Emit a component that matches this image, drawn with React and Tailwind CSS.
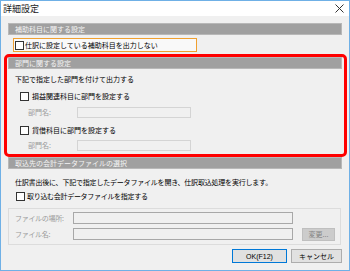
const jp = { fontFamily: '"Noto Sans CJK JP", "Noto Sans", sans-serif' };

const Check = () => (
  <span className="inline-block w-[9px] h-[9px] border border-[#333333] bg-white shrink-0" />
);

const Header = ({ children, className = '' }) => (
  <div className={`h-[12px] bg-[#a0a0a0] border border-[#b8b8b8] flex items-center pl-[6px] text-[7px] text-[#f4f4f4] ${className}`}>
    {children}
  </div>
);

const App = () => {
  return (
    <div className="relative w-[350px] h-[271px] border border-[#6fb0e6] bg-[#f0f0f0] text-black overflow-hidden" style={jp}>
      {/* title bar */}
      <div className="h-[15px] bg-white flex items-center justify-between pl-[2px] pr-[5px]">
        <span className="text-[9px] leading-none text-[#222]">詳細設定</span>
        <svg width="9" height="9" viewBox="0 0 9 9" className="text-[#333]">
          <path d="M0.5 0.5 8.5 8.5 M8.5 0.5 0.5 8.5" stroke="currentColor" strokeWidth="1" />
        </svg>
      </div>

      <div className="px-[7px] pr-[7px]">
        <Header className="mt-[7px]">補助科目に関する設定</Header>

        <div className="mt-[3px] ml-[5px] w-[184px] h-[14px] border border-[#f0a030] bg-[#f9f9f9] flex items-center gap-[1px] pl-[1px] text-[7px] leading-none">
          <Check />
          <span>仕訳に設定している補助科目を出力しない</span>
        </div>

        <Header className="mt-[5px]">部門に関する設定</Header>

        <div className="mt-[5px] h-[10px] flex items-center pl-[7px] text-[7px] leading-none">
          下記で指定した部門を付けて出力する
        </div>

        <div className="mt-[7px] h-[10px] flex items-center gap-[3px] pl-[12px] text-[7px] leading-none">
          <Check />
          <span>損益関連科目に部門を設定する</span>
        </div>

        <div className="mt-[6px] h-[11px] flex items-center text-[7px] leading-none">
          <span className="w-[69px] pl-[20px] text-[#9a9a9a]">部門名:</span>
          <span className="w-[114px] h-[11px] border border-[#d4d4d4] bg-[#f0f0f0]" />
        </div>

        <div className="mt-[7px] h-[10px] flex items-center gap-[3px] pl-[12px] text-[7px] leading-none">
          <Check />
          <span>貸借科目に部門を設定する</span>
        </div>

        <div className="mt-[5px] h-[11px] flex items-center text-[7px] leading-none">
          <span className="w-[69px] pl-[20px] text-[#9a9a9a]">部門名:</span>
          <span className="w-[114px] h-[11px] border border-[#d4d4d4] bg-[#f0f0f0]" />
        </div>

        <Header className="mt-[6px]">取込先の会計データファイルの選択</Header>

        <div className="mt-[8px] h-[10px] flex items-center pl-[7px] text-[7px] leading-none tracking-[-0.2px]">
          仕訳書出後に、下記で指定したデータファイルを開き、仕訳取込処理を実行します。
        </div>

        <div className="mt-[4px] h-[10px] flex items-center gap-[2px] pl-[8px] text-[7px] leading-none tracking-[-0.3px]">
          <Check />
          <span>取り込む会計データファイルを指定する</span>
        </div>

        <div className="mt-[7px] w-[333px] h-[37px] border border-[#dcdcdc] pt-[3px] text-[7px] leading-none text-[#9a9a9a]">
          <div className="flex items-center h-[12px]">
            <span className="w-[64px] pl-[6px] tracking-[-0.3px]">ファイルの場所:</span>
            <span className="w-[220px] h-[12px] border border-[#a8a8a8] bg-[#f0f0f0]" />
          </div>
          <div className="mt-[4px] flex items-center h-[12px]">
            <span className="w-[64px] pl-[6px] tracking-[-0.3px]">ファイル名:</span>
            <span className="w-[220px] h-[12px] border border-[#a8a8a8] bg-[#f0f0f0]" />
            <span className="ml-[9px] w-[33px] h-[13px] border border-[#bfbfbf] bg-[#cccccc] flex items-center justify-center text-[#838383]">
              変更...
            </span>
          </div>
        </div>

        <div className="mt-[4px] flex justify-end gap-[4px] text-[7px] leading-none">
          <span className="w-[55px] h-[14px] border border-[#0078d7] bg-[#e1e1e1] flex items-center justify-center" style={{ fontFamily: '"Liberation Sans", "Noto Sans CJK JP", sans-serif' }}>
            OK(F12)
          </span>
          <span className="w-[51px] h-[14px] border border-[#adadad] bg-[#e1e1e1] flex items-center justify-center">
            キャンセル
          </span>
        </div>
      </div>

      {/* red annotation over the department section */}
      <div className="absolute left-[3px] top-[53px] w-[343px] h-[103px] border-[3px] border-[#ff0000] rounded-[5px] pointer-events-none" />
    </div>
  );
};

export default App;
